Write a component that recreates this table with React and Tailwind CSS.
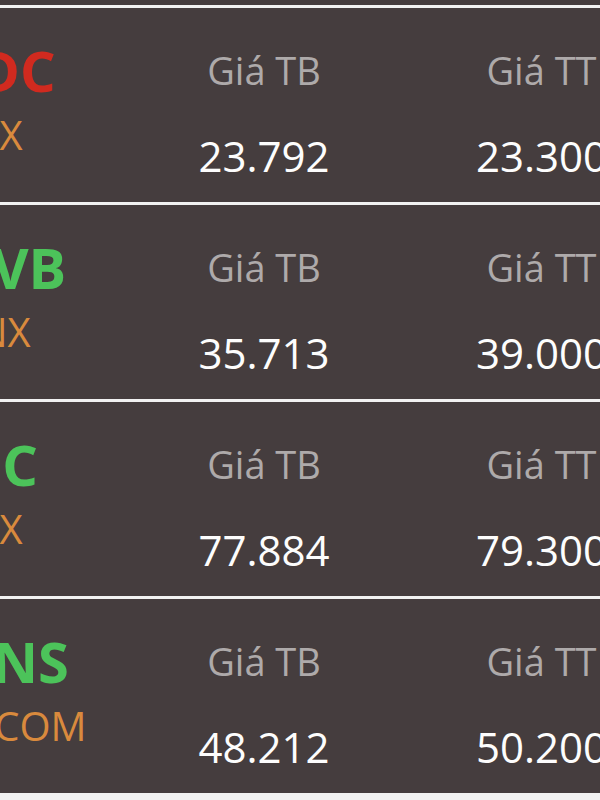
const rows = [
  { ticker: "TDC", exchange: "HNX", color: "text-[#d12a1f]", tb: "23.792", tt: "23.300", tShift: "-ml-[54px]", eShift: "-ml-[60px]" },
  { ticker: "PVB", exchange: "HNX", color: "text-[#4cc35a]", tb: "35.713", tt: "39.000", tShift: "-ml-[43px]", eShift: "-ml-[52px]" },
  { ticker: "DHC", exchange: "HNX", color: "text-[#4cc35a]", tb: "77.884", tt: "79.300", tShift: "-ml-[82px]", eShift: "-ml-[60px]" },
  { ticker: "VNS", exchange: "UPCOM", color: "text-[#4cc35a]", tb: "48.212", tt: "50.200", tShift: "-ml-[44px]", eShift: "-ml-[59px]" },
];

function PriceCol({ label, value, width }) {
  return (
    <div className={`${width} shrink-0 flex flex-col items-center pt-[43px]`}>
      <div className="text-[38px] leading-none text-[#aeaaaa]">{label}</div>
      <div className="mt-[46px] text-[42px] font-medium leading-none text-[#fdfdfd]">{value}</div>
    </div>
  );
}

export default function App() {
  return (
    <div
      className="w-[600px] h-[800px] overflow-hidden bg-[#f2f2f2] flex flex-col gap-[3px]"
      style={{ fontFamily: '"Open Sans", "Noto Sans", sans-serif' }}
    >
      <div className="h-[5px] shrink-0 bg-[#453d3e]" />
      {rows.map((r) => (
        <div key={r.ticker} className="h-[194px] shrink-0 bg-[#453d3e] flex overflow-hidden">
          <div className="w-[126px] shrink-0 pt-[34px] whitespace-nowrap">
            <div className={`text-[56px] font-bold leading-none ${r.color} ${r.tShift}`}>{r.ticker}</div>
            <div className={`mt-[17px] text-[40px] leading-none text-[#d98a3d] ${r.eShift}`}>{r.exchange}</div>
          </div>
          <PriceCol label="Giá TB" value={r.tb} width="w-[276px]" />
          <PriceCol label="Giá TT" value={r.tt} width="w-[279px]" />
        </div>
      ))}
    </div>
  );
}
